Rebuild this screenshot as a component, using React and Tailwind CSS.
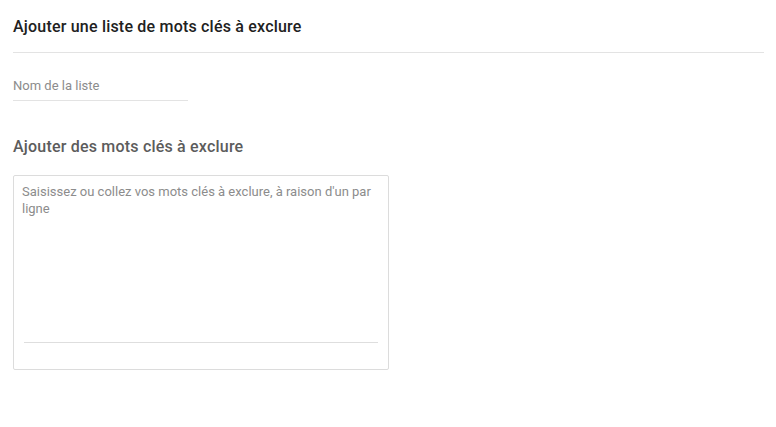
import { useState } from "react";

export default function App() {
  const [name, setName] = useState("");
  const [keywords, setKeywords] = useState("");

  return (
    <div className="w-[776px] h-[427px] bg-white px-[13px] pr-[12px] font-['Roboto',sans-serif]">
      {/* Header */}
      <div className="pt-[17px] pb-[15px] border-b border-[#e3e3e3]">
        <h1 className="text-[16px] leading-[20px] font-medium tracking-[0.2px] text-[#212121]">
          Ajouter une liste de mots clés à exclure
        </h1>
      </div>

      {/* List name */}
      <div className="pt-[23px]">
        <input
          className="block w-[175px] h-[25px] pb-[6px] border-b border-[#e3e3e3] text-[13px] text-[#333] placeholder-[#8c8c8c] focus:outline-none"
          placeholder="Nom de la liste"
          value={name}
          onChange={(e) => setName(e.target.value)}
        />
      </div>

      {/* Keywords */}
      <h2 className="mt-[36px] text-[16px] leading-[20px] font-medium tracking-[0.2px] text-[#5c5c5c]">
        Ajouter des mots clés à exclure
      </h2>
      <div className="mt-[18px] w-[376px] h-[195px] border border-[#dcdcdc] rounded-[2px] px-2 pt-[7px] flex flex-col">
        <textarea
          className="w-full h-[159px] resize-none text-[13px] leading-[17px] text-[#333] placeholder-[#8c8c8c] focus:outline-none"
          placeholder="Saisissez ou collez vos mots clés à exclure, à raison d'un par ligne"
          value={keywords}
          onChange={(e) => setKeywords(e.target.value)}
        />
        <div className="mx-[2px] border-b border-[#dedede]"></div>
      </div>
    </div>
  );
}
